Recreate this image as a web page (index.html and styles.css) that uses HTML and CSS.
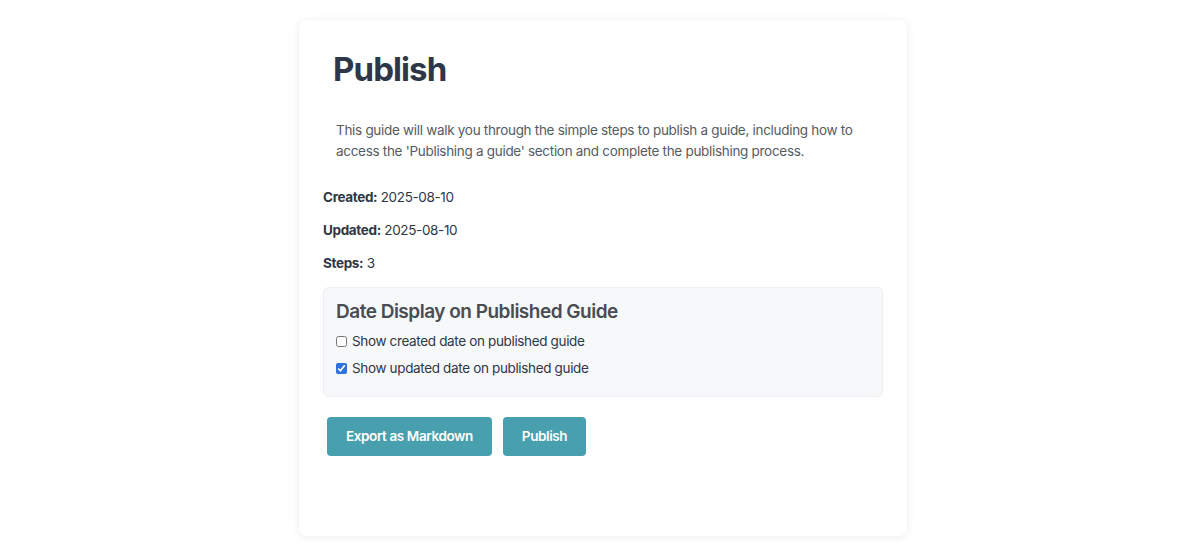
FILE: index.html
```html
<!DOCTYPE html>
<html lang="en">
<head>
    <meta charset="UTF-8">
    <meta name="viewport" content="width=device-width, initial-scale=1.0">
    <title>Publish</title>
    <link rel="stylesheet" href="styles.css">
</head>
<body>
    <div class="card">
        <h1>Publish</h1>

        <p class="description">This guide will walk you through the simple steps to publish a guide, including how to access the 'Publishing a guide' section and complete the publishing process.</p>

        <p class="meta"><strong>Created:</strong> 2025-08-10</p>
        <p class="meta"><strong>Updated:</strong> 2025-08-10</p>
        <p class="meta"><strong>Steps:</strong> 3</p>

        <div class="date-options">
            <h3>Date Display on Published Guide</h3>
            <label class="option">
                <input type="checkbox"> Show created date on published guide
            </label>
            <label class="option">
                <input type="checkbox" checked> Show updated date on published guide
            </label>
        </div>

        <div class="actions">
            <button class="button">Export as Markdown</button>
            <button class="button">Publish</button>
        </div>
    </div>
</body>
</html>
```

FILE: styles.css
```css
body {
    font-family: Inter, 'Noto Sans', sans-serif;
    margin: 0;
    padding: 20px 0 12px 6px;
    background: #ffffff;
    color: #2d3748;
}
.card {
    width: 560px;
    margin: 0 auto;
    padding: 24px 24px 80px;
    background: #ffffff;
    border-radius: 8px;
    box-shadow: 0 1px 8px rgba(0, 0, 0, 0.08);
}
h1 {
    margin: 4px 10px 29px;
    font-size: 33px;
    line-height: 43px;
    font-weight: 700;
    letter-spacing: -0.9px;
    color: #2d3748;
}
.description {
    margin: 0 13px 25px;
    font-size: 13.5px;
    line-height: 21px;
    letter-spacing: -0.3px;
    color: #555b64;
}
.meta {
    margin: 0 0 13px;
    font-size: 13.5px;
    line-height: 20px;
    letter-spacing: -0.35px;
    color: #2d3748;
}
.meta strong {
    font-weight: 700;
}
.date-options {
    margin-top: 14px;
    padding: 12px 12px 11px;
    background: #f7f8fa;
    border: 1px solid #eceef1;
    border-radius: 6px;
}
.date-options h3 {
    margin: 0 0 7px;
    font-size: 19px;
    line-height: 24px;
    font-weight: 600;
    letter-spacing: -0.5px;
    color: #484c53;
}
.option {
    display: flex;
    align-items: center;
    margin-bottom: 7px;
    font-size: 13.5px;
    line-height: 20px;
    letter-spacing: -0.35px;
    color: #2d3748;
}
.option input {
    width: 11px;
    height: 11px;
    margin: 0 5px 0 0;
    accent-color: #2f6fde;
}
.actions {
    margin-top: 20px;
    display: flex;
    gap: 11px;
    padding-left: 4px;
}
.button {
    font-family: inherit;
    font-size: 13.5px;
    font-weight: 600;
    line-height: 17px;
    letter-spacing: -0.4px;
    color: #ffffff;
    background: #489fae;
    border: none;
    border-radius: 4px;
    padding: 11px 19px;
    cursor: pointer;
}
```
